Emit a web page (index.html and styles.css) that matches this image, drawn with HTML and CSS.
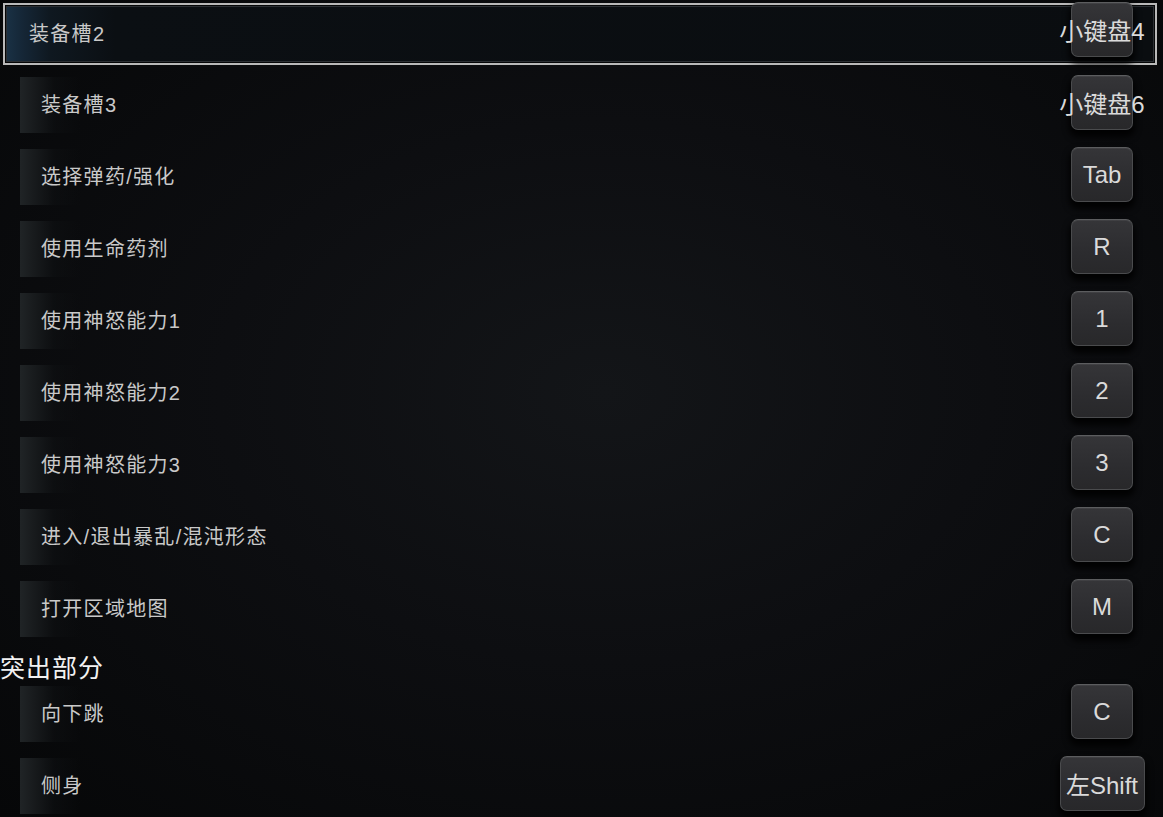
FILE: index.html
```html
<!DOCTYPE html>
<html lang="zh-CN">
<head>
<meta charset="utf-8">
<title>按键绑定</title>
<link rel="stylesheet" href="styles.css">
</head>
<body>
<div class="list">
  <div class="row selected"><span class="label">装备槽2</span><span class="slot"><span class="key">小键盘4</span></span></div>
  <div class="row"><span class="label">装备槽3</span><span class="slot"><span class="key">小键盘6</span></span></div>
  <div class="row"><span class="label">选择弹药/强化</span><span class="slot"><span class="key">Tab</span></span></div>
  <div class="row"><span class="label">使用生命药剂</span><span class="slot"><span class="key">R</span></span></div>
  <div class="row"><span class="label">使用神怒能力1</span><span class="slot"><span class="key">1</span></span></div>
  <div class="row"><span class="label">使用神怒能力2</span><span class="slot"><span class="key">2</span></span></div>
  <div class="row"><span class="label">使用神怒能力3</span><span class="slot"><span class="key">3</span></span></div>
  <div class="row"><span class="label">进入/退出暴乱/混沌形态</span><span class="slot"><span class="key">C</span></span></div>
  <div class="row"><span class="label">打开区域地图</span><span class="slot"><span class="key">M</span></span></div>
  <div class="section">突出部分</div>
  <div class="row"><span class="label">向下跳</span><span class="slot"><span class="key">C</span></span></div>
  <div class="row"><span class="label">侧身</span><span class="slot"><span class="key wide">左Shift</span></span></div>
</div>
</body>
</html>
```
FILE: styles.css
```css
html, body {
  margin: 0;
  height: 100%;
}
body {
  background: radial-gradient(ellipse at 52% 48%, #131518 0%, #0d0e11 45%, #060708 100%);
  font-family: "Liberation Sans", "Noto Sans CJK SC", sans-serif;
  overflow: hidden;
}
.list {
  display: flex;
  flex-direction: column;
  padding-top: 3px;
}
.row {
  box-sizing: border-box;
  height: 56px;
  margin: 0 6px 16px 20px;
  padding: 0 24px 0 21px;
  display: flex;
  align-items: center;
  justify-content: space-between;
  background: linear-gradient(to right, #202426 0px, #191c1e 12px, rgba(14,16,18,0.6) 34px, rgba(10,11,13,0) 60px);
}
.row.selected {
  height: 62px;
  margin: 0 6px 12px 3px;
  padding: 0 22px 0 24px;
  border: 2px solid #b9b9b9;
  box-shadow: inset 0 0 0 1px #050607, inset 0 0 0 2px #2b2f33;
  background: linear-gradient(to right, #1a3246 0px, #152636 18px, #0f1820 45px, #0b0f13 110px, #0a0d10 100%);
}
.label {
  color: #c9c9c9;
  font-size: 20px;
  letter-spacing: 1.3px;
  white-space: nowrap;
  margin-bottom: 4px;
}
.slot {
  width: 62px;
  display: flex;
  justify-content: center;
  margin-bottom: 5px;
}
.selected .slot {
  margin-bottom: 9px;
}
.key {
  box-sizing: border-box;
  flex: none;
  width: 62px;
  height: 55px;
  display: flex;
  align-items: center;
  justify-content: center;
  white-space: nowrap;
  border-radius: 7px;
  border: 1px solid #4a4b4d;
  border-top-color: #5c5d5f;
  background: linear-gradient(#353538 0%, #2c2c2f 60%, #28282a 100%);
  box-shadow: inset 0 1px 0 rgba(255,255,255,0.06), 0 5px 6px 2px rgba(0,0,0,0.85);
  color: #dadada;
  font-size: 24px;
}
.key.wide {
  width: 85px;
}
.section {
  color: #f2f2f2;
  font-family: "Noto Sans CJK SC", sans-serif;
  font-size: 25px;
  line-height: 36px;
  height: 36px;
  margin: -5px 0 2px 0;
  letter-spacing: 1px;
}
```
